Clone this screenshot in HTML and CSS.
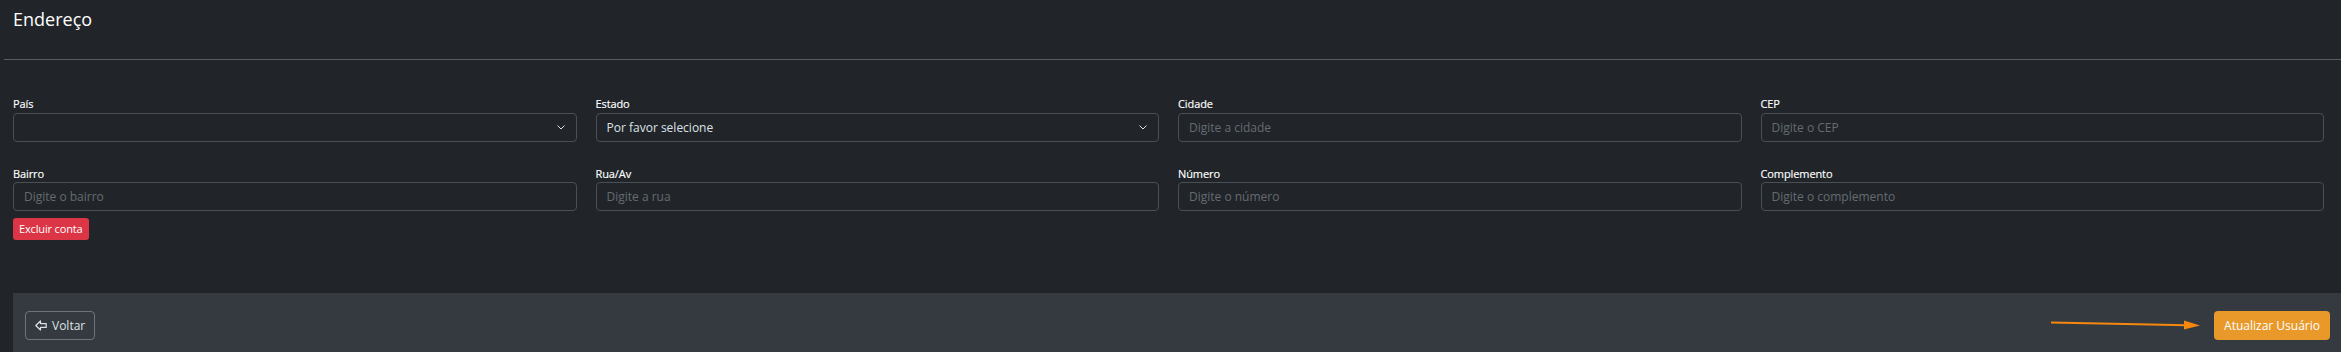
FILE: index.html
```html
<!DOCTYPE html>
<html lang="pt-BR">
<head>
<meta charset="utf-8">
<title>Endereço</title>
<link rel="stylesheet" href="styles.css">
</head>
<body>
<div class="card">
  <h5 class="title">Endereço</h5>
  <hr class="divider">
</div>

<form class="form">
  <div class="grid">
    <div class="field">
      <label class="label">País</label>
      <div class="select-wrap">
        <select class="control select"><option></option></select>
        <svg class="chevron" width="8" height="5" viewBox="0 0 8 5"><path d="M0.5 0.5 L4 4 L7.5 0.5" fill="none" stroke="#dee2e6" stroke-width="1"/></svg>
      </div>
    </div>
    <div class="field">
      <label class="label">Estado</label>
      <div class="select-wrap">
        <select class="control select"><option>Por favor selecione</option></select>
        <svg class="chevron" width="8" height="5" viewBox="0 0 8 5"><path d="M0.5 0.5 L4 4 L7.5 0.5" fill="none" stroke="#dee2e6" stroke-width="1"/></svg>
      </div>
    </div>
    <div class="field">
      <label class="label">Cidade</label>
      <input class="control" type="text" placeholder="Digite a cidade">
    </div>
    <div class="field">
      <label class="label">CEP</label>
      <input class="control" type="text" placeholder="Digite o CEP">
    </div>
    <div class="field">
      <label class="label">Bairro</label>
      <input class="control" type="text" placeholder="Digite o bairro">
    </div>
    <div class="field">
      <label class="label">Rua/Av</label>
      <input class="control" type="text" placeholder="Digite a rua">
    </div>
    <div class="field">
      <label class="label">Número</label>
      <input class="control" type="text" placeholder="Digite o número">
    </div>
    <div class="field">
      <label class="label">Complemento</label>
      <input class="control" type="text" placeholder="Digite o complemento">
    </div>
  </div>
  <button type="button" class="btn-danger">Excluir conta</button>
</form>

<div class="footer">
  <button type="button" class="btn-back">
    <svg width="12" height="11" viewBox="0 0 12 11"><path d="M0.8 5.5 L5.5 1 V3.6 H11.2 V7.4 H5.5 V10 Z" fill="none" stroke="#dee2e6" stroke-width="1.2" stroke-linejoin="round"/></svg>
    <span>Voltar</span>
  </button>
  <div class="footer-right">
    <svg class="annot" width="150" height="12" viewBox="0 0 150 12"><line x1="0" y1="3.5" x2="136" y2="6.3" stroke="#f7870f" stroke-width="2"/><path d="M133 1.5 L149 6.6 L133 10.5 Z" fill="#f7870f"/></svg>
    <button type="button" class="btn-warning">Atualizar Usuário</button>
  </div>
</div>
</body>
</html>
```

FILE: styles.css
```css
html, body {
  margin: 0;
  padding: 0;
  background: #212529;
  overflow: hidden;
  height: 352px;
}

body {
  font-family: "Open Sans", "Noto Sans", sans-serif;
  color: #ffffff;
}

.card {
  padding: 8px 0 0 4px;
}

.title {
  margin: 0 0 29px 9px;
  font-size: 18px;
  font-weight: 400;
  line-height: 22px;
  color: #ffffff;
}

.divider {
  margin: 0;
  border: 0;
  border-top: 1px solid #5a5e63;
  height: 0;
}

.form {
  padding: 36px 17px 0 13px;
}

.grid {
  display: grid;
  grid-template-columns: repeat(4, 1fr);
  column-gap: 19px;
  row-gap: 24px;
}

.field {
  display: flex;
  flex-direction: column;
}

.label {
  font-size: 11px;
  line-height: 15px;
  margin-bottom: 1.5px;
  color: #ffffff;
  letter-spacing: -0.1px;
  -webkit-text-stroke: 0.15px #ffffff;
}

.control {
  box-sizing: border-box;
  height: 29px;
  width: 100%;
  margin: 0;
  padding: 0 10px;
  background: #212529;
  border: 1px solid #4a4f54;
  border-radius: 4px;
  font-family: "Open Sans", "Noto Sans", sans-serif;
  font-size: 12px;
  color: #dee2e6;
  outline: none;
}

.control::placeholder {
  color: #646b72;
}

.select-wrap {
  position: relative;
}

.select {
  appearance: none;
  -webkit-appearance: none;
  display: block;
}

.chevron {
  position: absolute;
  right: 12px;
  top: 12px;
}

.btn-danger {
  margin-top: 6.5px;
  height: 22px;
  padding: 0 6px;
  border: 0;
  border-radius: 3px;
  background: #dc3545;
  color: #ffffff;
  font-family: "Open Sans", "Noto Sans", sans-serif;
  font-size: 11px;
  line-height: 22px;
  letter-spacing: -0.15px;
}

.footer {
  margin: 53px 0 0 13px;
  padding: 18px 11px 20px 12px;
  background: #343a40;
  display: flex;
  justify-content: space-between;
  align-items: center;
}

.btn-back {
  display: flex;
  align-items: center;
  gap: 5px;
  height: 29px;
  padding: 0 9px 0 9px;
  background: transparent;
  border: 1px solid #6c757d;
  border-radius: 4px;
  color: #dee2e6;
  font-family: "Open Sans", "Noto Sans", sans-serif;
  font-size: 12px;
}

.footer-right {
  display: flex;
  align-items: center;
  gap: 13px;
}

.annot {
  display: block;
}

.btn-warning {
  height: 29px;
  padding: 0 10px;
  background: #e8992a;
  border: 0;
  border-radius: 4px;
  color: #ffffff;
  font-family: "Open Sans", "Noto Sans", sans-serif;
  font-size: 12px;
}
```
